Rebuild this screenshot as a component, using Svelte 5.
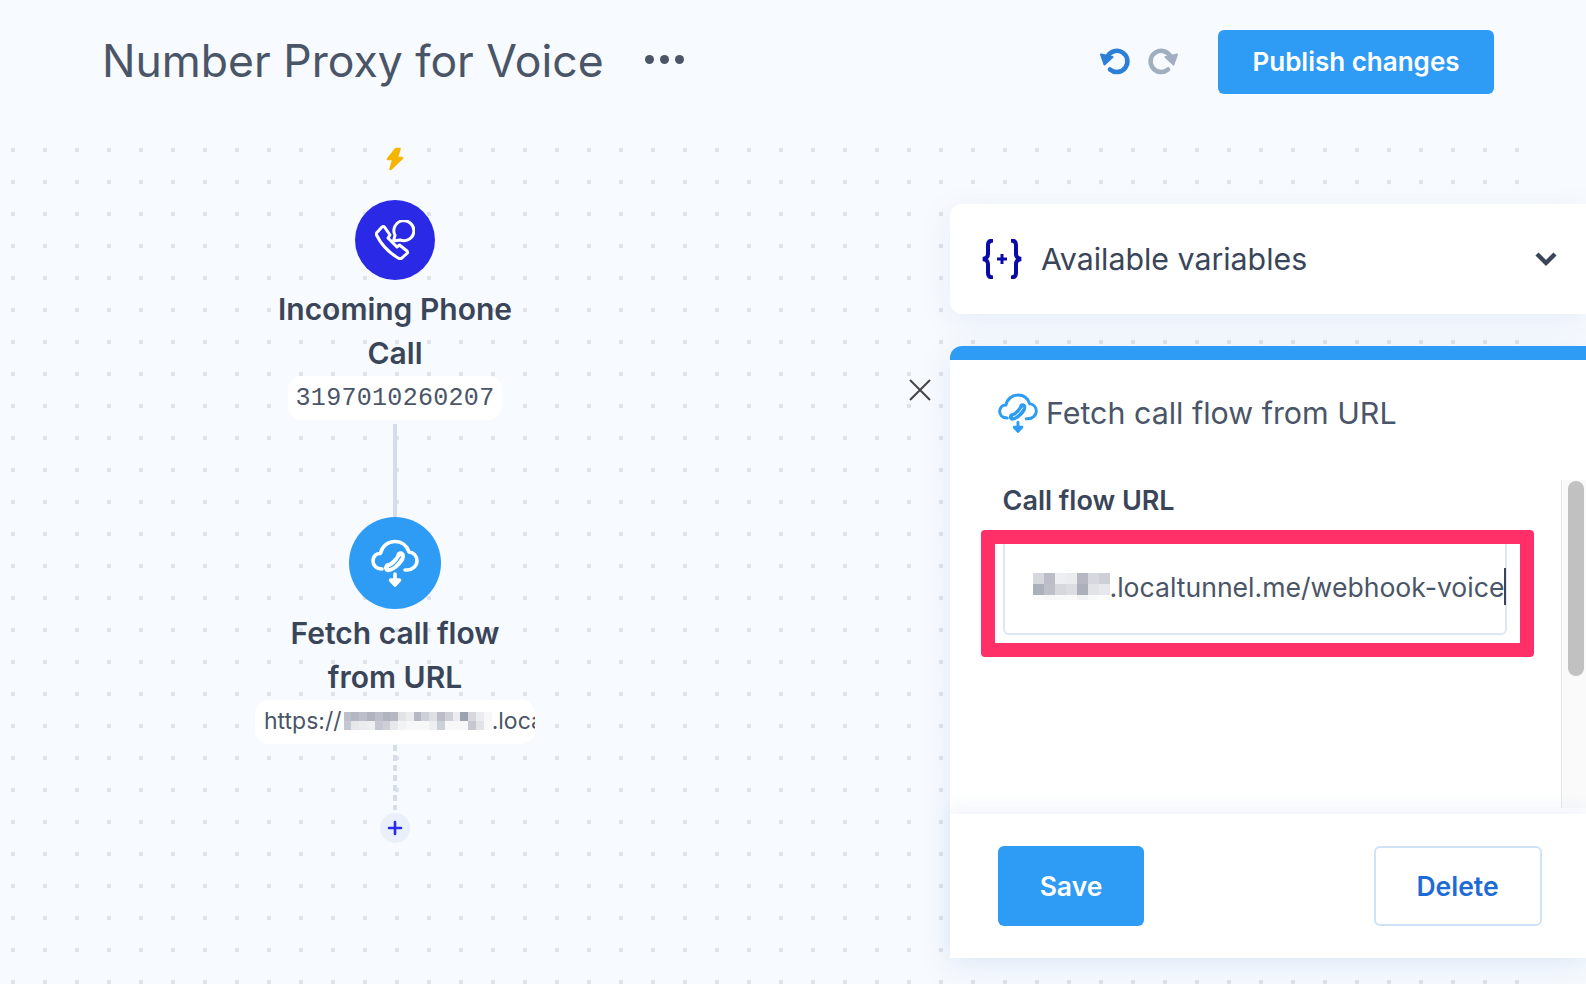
<script lang="ts">
  // mosaic cells hiding the private part of the tunnel url (grey alpha per block)
  const pillBlur = [
    [0.4, 0.45, 0.4, 0.48, 0.4, 0.48, 0.45, 0.18, 0.12, 0.45, 0.3, 0.2, 0.42, 0.3, 0.12, 0.6, 0.25, 0.12, 0.05],
    [0.35, 0.15, 0.12, 0.1, 0.35, 0.3, 0.15, 0.08, 0.05, 0.05, 0.05, 0.1, 0.3, 0.05, 0.05, 0.05, 0.35, 0.18, 0.04]
  ]
  const inputBlur = [
    { h: 11, cells: [0.25, 0.42, 0.1, 0.12, 0.45, 0.25, 0.3] },
    { h: 11, cells: [0.5, 0.4, 0.25, 0.22, 0.5, 0.18, 0.15] },
    { h: 5, cells: [0.03, 0.05, 0.04, 0.03, 0.08, 0.03, 0.02] }
  ]
  const pillRows = pillBlur.map((cells) => ({ h: 9, cells }))
</script>

{#snippet mosaic(rows: { h: number; cells: number[] }[], w: number)}
  <span class="mosaic">
    {#each rows as row}
      <span class="mosaic-row">
        {#each row.cells as a}
          <i style="width:{w}px;height:{row.h}px;background:rgba(90,98,120,{a})"></i>
        {/each}
      </span>
    {/each}
  </span>
{/snippet}

{#snippet cloud(color: string, hole: string)}
  <svg viewBox="0 0 48 48" fill="none" stroke={color} stroke-width="3.6" stroke-linecap="round" stroke-linejoin="round" aria-hidden="true">
    <path d="M11 30 C5 30 2 26 2 22 C2 17 6 14 9.5 14.5 C11 7 17 2.5 24 2.5 C31 2.5 36 7 38 13 C42.5 13.5 46 17 46 22 C46 27 41 31 36 31 H34" />
    <path d="M16 26 Q19 26 21 24 L25 20 Q27 18 27.5 15 Q30 13 32 15.5 Q33 20 28 25 Q22 31 17 31.5 Q13 30 16 26 Z" fill={color} />
    <path d="M18.5 28.5 Q24 27 29.5 18" stroke={hole} stroke-width="1.2" />
    <path d="M24 35 V44" />
    <path d="M19.5 41 L24 46 L28.5 41 Z" fill={color} />
  </svg>
{/snippet}

<div class="page">
  <header class="topbar">
    <div class="title-wrap">
      <h1>Number Proxy for Voice</h1>
      <span class="more"><i></i><i></i><i></i></span>
    </div>
    <div class="actions">
      <svg class="hist" viewBox="0 0 34 30" width="34" height="30" aria-hidden="true">
        <path d="M10 22.5a10.6 10.6 0 1 0-2.6-13" fill="none" stroke="#2b7fd6" stroke-width="4.6" stroke-linecap="round" />
        <path d="M1 7.5 L12.5 10 L4.5 17.5 Z" fill="#2b7fd6" stroke="#2b7fd6" stroke-width="2" stroke-linejoin="round" />
      </svg>
      <svg class="hist redo" viewBox="0 0 34 30" width="34" height="30" aria-hidden="true">
        <path d="M24 22.5a10.6 10.6 0 1 1 2.6-13" fill="none" stroke="#a0aec0" stroke-width="4.6" stroke-linecap="round" />
        <path d="M33 7.5 L21.5 10 L29.5 17.5 Z" fill="#a0aec0" stroke="#a0aec0" stroke-width="2" stroke-linejoin="round" />
      </svg>
      <button type="button" class="publish">Publish changes</button>
    </div>
  </header>

  <main class="stage">
    <section class="flow">
      <svg class="bolt" viewBox="0 0 18 24" width="18" height="24" aria-hidden="true">
        <path d="M10 2 L2 12 H7.5 L4.5 22 L16 11 H10.5 L13.5 2 Z" fill="#f7b500" stroke="#f7b500" stroke-width="2.6" stroke-linejoin="round" />
      </svg>

      <div class="node-icon trigger">
        <svg viewBox="0 0 40 40" width="40" height="40" fill="none" stroke="#fff" stroke-width="3" stroke-linejoin="round" stroke-linecap="round" aria-hidden="true">
          <path d="M1.5 13 L7 7 Q8.5 6 9.5 7 L15 15 L13 18 L22 27 L24.5 25 L32 31 Q33 32 32.5 33 L27 38 Q25.5 39 24 38.5 Q9 30 1.5 15 Z" />
          <path d="M18.5 21 L20 15.3 A10 10 0 1 1 25 19.9 Z" />
        </svg>
      </div>
      <h3 class="node-title">Incoming Phone<br />Call</h3>
      <div class="pill number">3197010260207</div>

      <div class="wire solid"></div>

      <div class="node-icon fetch">
        {@render cloud('#fff', '#2e9bf5')}
      </div>
      <h3 class="node-title second">Fetch call flow<br />from URL</h3>
      <div class="pill url">
        <span>https://</span><span class="blur-gap"></span>{@render mosaic(pillRows, 7.8)}<span>.localtunnel.me/webhook-voice</span>
      </div>

      <div class="wire dashed"></div>
      <button type="button" class="add" aria-label="Add step">
        <svg viewBox="0 0 16 16" width="16" height="16" aria-hidden="true">
          <path d="M8 2v12M2 8h12" stroke="#2a2ae6" stroke-width="2.6" stroke-linecap="round" />
        </svg>
      </button>
    </section>

    <aside class="side">
      <button type="button" class="close" aria-label="Close">
        <svg viewBox="0 0 22 22" width="22" height="22" aria-hidden="true">
          <path d="M1 1l20 20M21 1L1 21" stroke="#444" stroke-width="2" />
        </svg>
      </button>

      <div class="vars">
        <svg class="vars-icon" viewBox="0 0 40 40" width="40" height="40" fill="none" stroke="#0a0aa8" aria-hidden="true">
          <path d="M11 1.5 Q6 1.5 6 6 V15 Q6 19 1 20 Q6 21 6 25 V34 Q6 38.5 11 38.5" stroke-width="4" />
          <path d="M29 1.5 Q34 1.5 34 6 V15 Q34 19 39 20 Q34 21 34 25 V34 Q34 38.5 29 38.5" stroke-width="4" />
          <path d="M20 15v10M15 20h10" stroke-width="3" />
        </svg>
        <span class="vars-label">Available variables</span>
        <svg class="chevron" viewBox="0 0 24 16" width="24" height="16" aria-hidden="true">
          <path d="M3 3l9 9 9-9" fill="none" stroke="#3a4559" stroke-width="4.4" />
        </svg>
      </div>

      <div class="panel">
        <div class="panel-head">
          <span class="head-icon">{@render cloud('#2e9bf5', '#fff')}</span>
          <h2>Fetch call flow from URL</h2>
        </div>

        <div class="panel-body">
          <div class="form">
            <div class="field-label">Call flow URL</div>
            <div class="input">
              {@render mosaic(inputBlur, 11)}<span>.localtunnel.me/webhook-voice</span><span class="caret"></span>
              <div class="highlight"></div>
            </div>
          </div>
          <div class="scrollbar"><div class="thumb"></div></div>
        </div>

        <div class="panel-foot">
          <button type="button" class="save">Save</button>
          <button type="button" class="delete">Delete</button>
        </div>
      </div>
    </aside>
  </main>
</div>

<style>
  :global(body) {
    margin: 0;
    background: #f7fafe;
    font-family: Inter, 'Liberation Sans', sans-serif;
    color: #3a4559;
    overflow: hidden;
  }
  .page {
    width: 1586px;
    height: 984px;
    display: flex;
    flex-direction: column;
    overflow: hidden;
  }
  .topbar {
    height: 130px;
    flex: none;
    box-sizing: border-box;
    padding: 30px 92px 0 102px;
    display: flex;
    justify-content: space-between;
    align-items: flex-start;
  }
  .title-wrap {
    display: flex;
    align-items: center;
    height: 64px;
    gap: 41px;
  }
  h1 {
    margin: 0 0 2px;
    font-size: 44.5px;
    font-weight: 400;
    color: #4a5568;
    white-space: nowrap;
  }
  .more {
    display: flex;
    gap: 6px;
    margin-bottom: 6px;
  }
  .more i {
    width: 9px;
    height: 9px;
    border-radius: 50%;
    background: #4a5568;
  }
  .actions {
    display: flex;
    align-items: center;
    height: 64px;
  }
  .hist {
    margin-right: 10px;
    margin-bottom: 1px;
  }
  .hist.redo {
    margin-right: 40px;
  }
  .publish {
    width: 276px;
    height: 64px;
    padding: 0 0 2px;
    border: none;
    border-radius: 6px;
    background: #2e9bf5;
    color: #fff;
    font: 600 26px Inter, 'Liberation Sans', sans-serif;
  }

  .stage {
    position: relative;
    flex: 1;
    display: flex;
    min-height: 0;
  }
  .stage::before {
    content: '';
    position: absolute;
    top: 0;
    bottom: 0;
    left: 0;
    width: 1530px;
    background-image: radial-gradient(circle at 13px 20px, #dde1e8 2px, transparent 2.6px);
    background-size: 32px 32px;
  }
  .flow {
    position: relative;
    width: 790px;
    flex: none;
    box-sizing: border-box;
    padding-top: 17px;
    display: flex;
    flex-direction: column;
    align-items: center;
  }
  .bolt {
    display: block;
    margin-bottom: 29px;
  }
  .node-icon {
    display: flex;
    align-items: center;
    justify-content: center;
    border-radius: 50%;
    flex: none;
  }
  .trigger {
    width: 80px;
    height: 80px;
    background: #2a2ae6;
  }
  .fetch {
    width: 92px;
    height: 92px;
    background: #2e9bf5;
  }
  .fetch :global(svg) {
    width: 48px;
    height: 48px;
  }
  .node-title {
    margin: 8px 0 1px;
    font-size: 30px;
    line-height: 43.5px;
    font-weight: 600;
    text-align: center;
    color: #3a4559;
  }
  .node-title.second {
    margin: 3px 0 1px;
  }
  .pill {
    box-sizing: border-box;
    height: 44px;
    flex: none;
    background: #fff;
    border-radius: 14px;
    display: flex;
    align-items: center;
    color: #4a5568;
    white-space: nowrap;
  }
  .number {
    width: 214px;
    justify-content: center;
    font: 25px 'Liberation Mono', monospace;
    letter-spacing: 0.3px;
  }
  .url {
    width: 280px;
    padding: 0 0 3px 9px;
    font-size: 23px;
    overflow: hidden;
  }
  .blur-gap {
    width: 2px;
    flex: none;
  }
  .mosaic {
    display: inline-flex;
    flex-direction: column;
    flex: none;
  }
  .mosaic-row {
    display: flex;
  }
  .mosaic i {
    display: block;
  }
  .wire {
    width: 4px;
    flex: none;
  }
  .wire.solid {
    height: 93px;
    margin-top: 4px;
    background: #d5dcec;
  }
  .wire.dashed {
    height: 65px;
    margin-top: 1px;
    background: repeating-linear-gradient(to bottom, #d5dcec 0 6px, transparent 6px 10px);
  }
  .add {
    width: 30px;
    height: 30px;
    margin-top: 3px;
    padding: 0;
    border: none;
    border-radius: 50%;
    background: #e9effb;
    display: flex;
    align-items: center;
    justify-content: center;
    flex: none;
  }

  .side {
    position: relative;
    margin-left: 160px;
    flex: 1;
    min-width: 0;
    padding-top: 74px;
    display: flex;
    flex-direction: column;
    gap: 32px;
  }
  .close {
    position: absolute;
    left: -41px;
    top: 249px;
    width: 22px;
    height: 22px;
    padding: 0;
    border: none;
    background: none;
  }
  .vars {
    height: 110px;
    flex: none;
    box-sizing: border-box;
    padding: 0 28px 0 32px;
    background: #fff;
    border-radius: 12px 0 0 12px;
    box-shadow: 0 8px 30px rgba(120, 160, 210, 0.12);
    display: flex;
    align-items: center;
  }
  .vars-label {
    margin-left: 19px;
    flex: 1;
    font-size: 30.3px;
    color: #3a4559;
  }
  .panel {
    height: 612px;
    flex: none;
    box-sizing: border-box;
    background: #fff;
    border-top: 14px solid #2e9bf5;
    border-radius: 12px 0 0 0;
    box-shadow: 0 8px 30px rgba(120, 160, 210, 0.16);
    display: flex;
    flex-direction: column;
  }
  .panel-head {
    height: 120px;
    flex: none;
    box-sizing: border-box;
    padding: 33px 0 0 48px;
    display: flex;
    align-items: flex-start;
    gap: 8px;
  }
  .head-icon {
    display: block;
    width: 40px;
    height: 40px;
    flex: none;
  }
  .head-icon :global(svg) {
    display: block;
    width: 40px;
    height: 40px;
  }
  .panel-head h2 {
    margin: 1px 0 0;
    height: 40px;
    line-height: 38px;
    font-size: 30.4px;
    font-weight: 400;
    color: #4a5568;
  }
  .panel-body {
    flex: 1;
    min-height: 0;
    display: flex;
  }
  .form {
    flex: 1;
    min-width: 0;
    padding: 6px 54px 0 52.5px;
  }
  .field-label {
    height: 36px;
    line-height: 30px;
    font-size: 27px;
    font-weight: 600;
    color: #3a4559;
  }
  .input {
    position: relative;
    box-sizing: border-box;
    height: 95px;
    margin-top: 18px;
    padding: 0 0 2px 28px;
    border: 2px solid #dce8f5;
    border-radius: 0 0 6px 6px;
    display: flex;
    align-items: center;
    font-size: 26.6px;
    color: #4a5568;
    white-space: nowrap;
  }
  .caret {
    width: 2px;
    height: 37px;
    flex: none;
    background: #3a4559;
  }
  .highlight {
    position: absolute;
    left: -23.5px;
    right: -29px;
    top: -12px;
    bottom: -24px;
    border: 14px solid #ff3068;
    border-radius: 4px;
    pointer-events: none;
  }
  .scrollbar {
    width: 25px;
    flex: none;
    box-sizing: border-box;
    background: #fafafa;
    border-left: 1px solid #e6e6e6;
    padding: 1px 2px 0 6px;
    margin-bottom: 6px;
  }
  .thumb {
    height: 195px;
    background: #c1c1c1;
    border-radius: 8px;
  }
  .panel-foot {
    height: 144px;
    flex: none;
    box-sizing: border-box;
    padding: 32px 44.5px 32px 48px;
    background: #fff;
    box-shadow: 0 -6px 16px rgba(120, 160, 210, 0.12);
    position: relative;
    display: flex;
    justify-content: space-between;
  }
  .panel-foot button {
    height: 80px;
    border-radius: 6px;
    font: 600 26.5px Inter, 'Liberation Sans', sans-serif;
  }
  .save {
    width: 146px;
    border: none;
    background: #2e9bf5;
    color: #fff;
  }
  .delete {
    width: 168px;
    border: 2px solid #cfe2f7;
    background: #fff;
    color: #1f6bd6;
  }
</style>
